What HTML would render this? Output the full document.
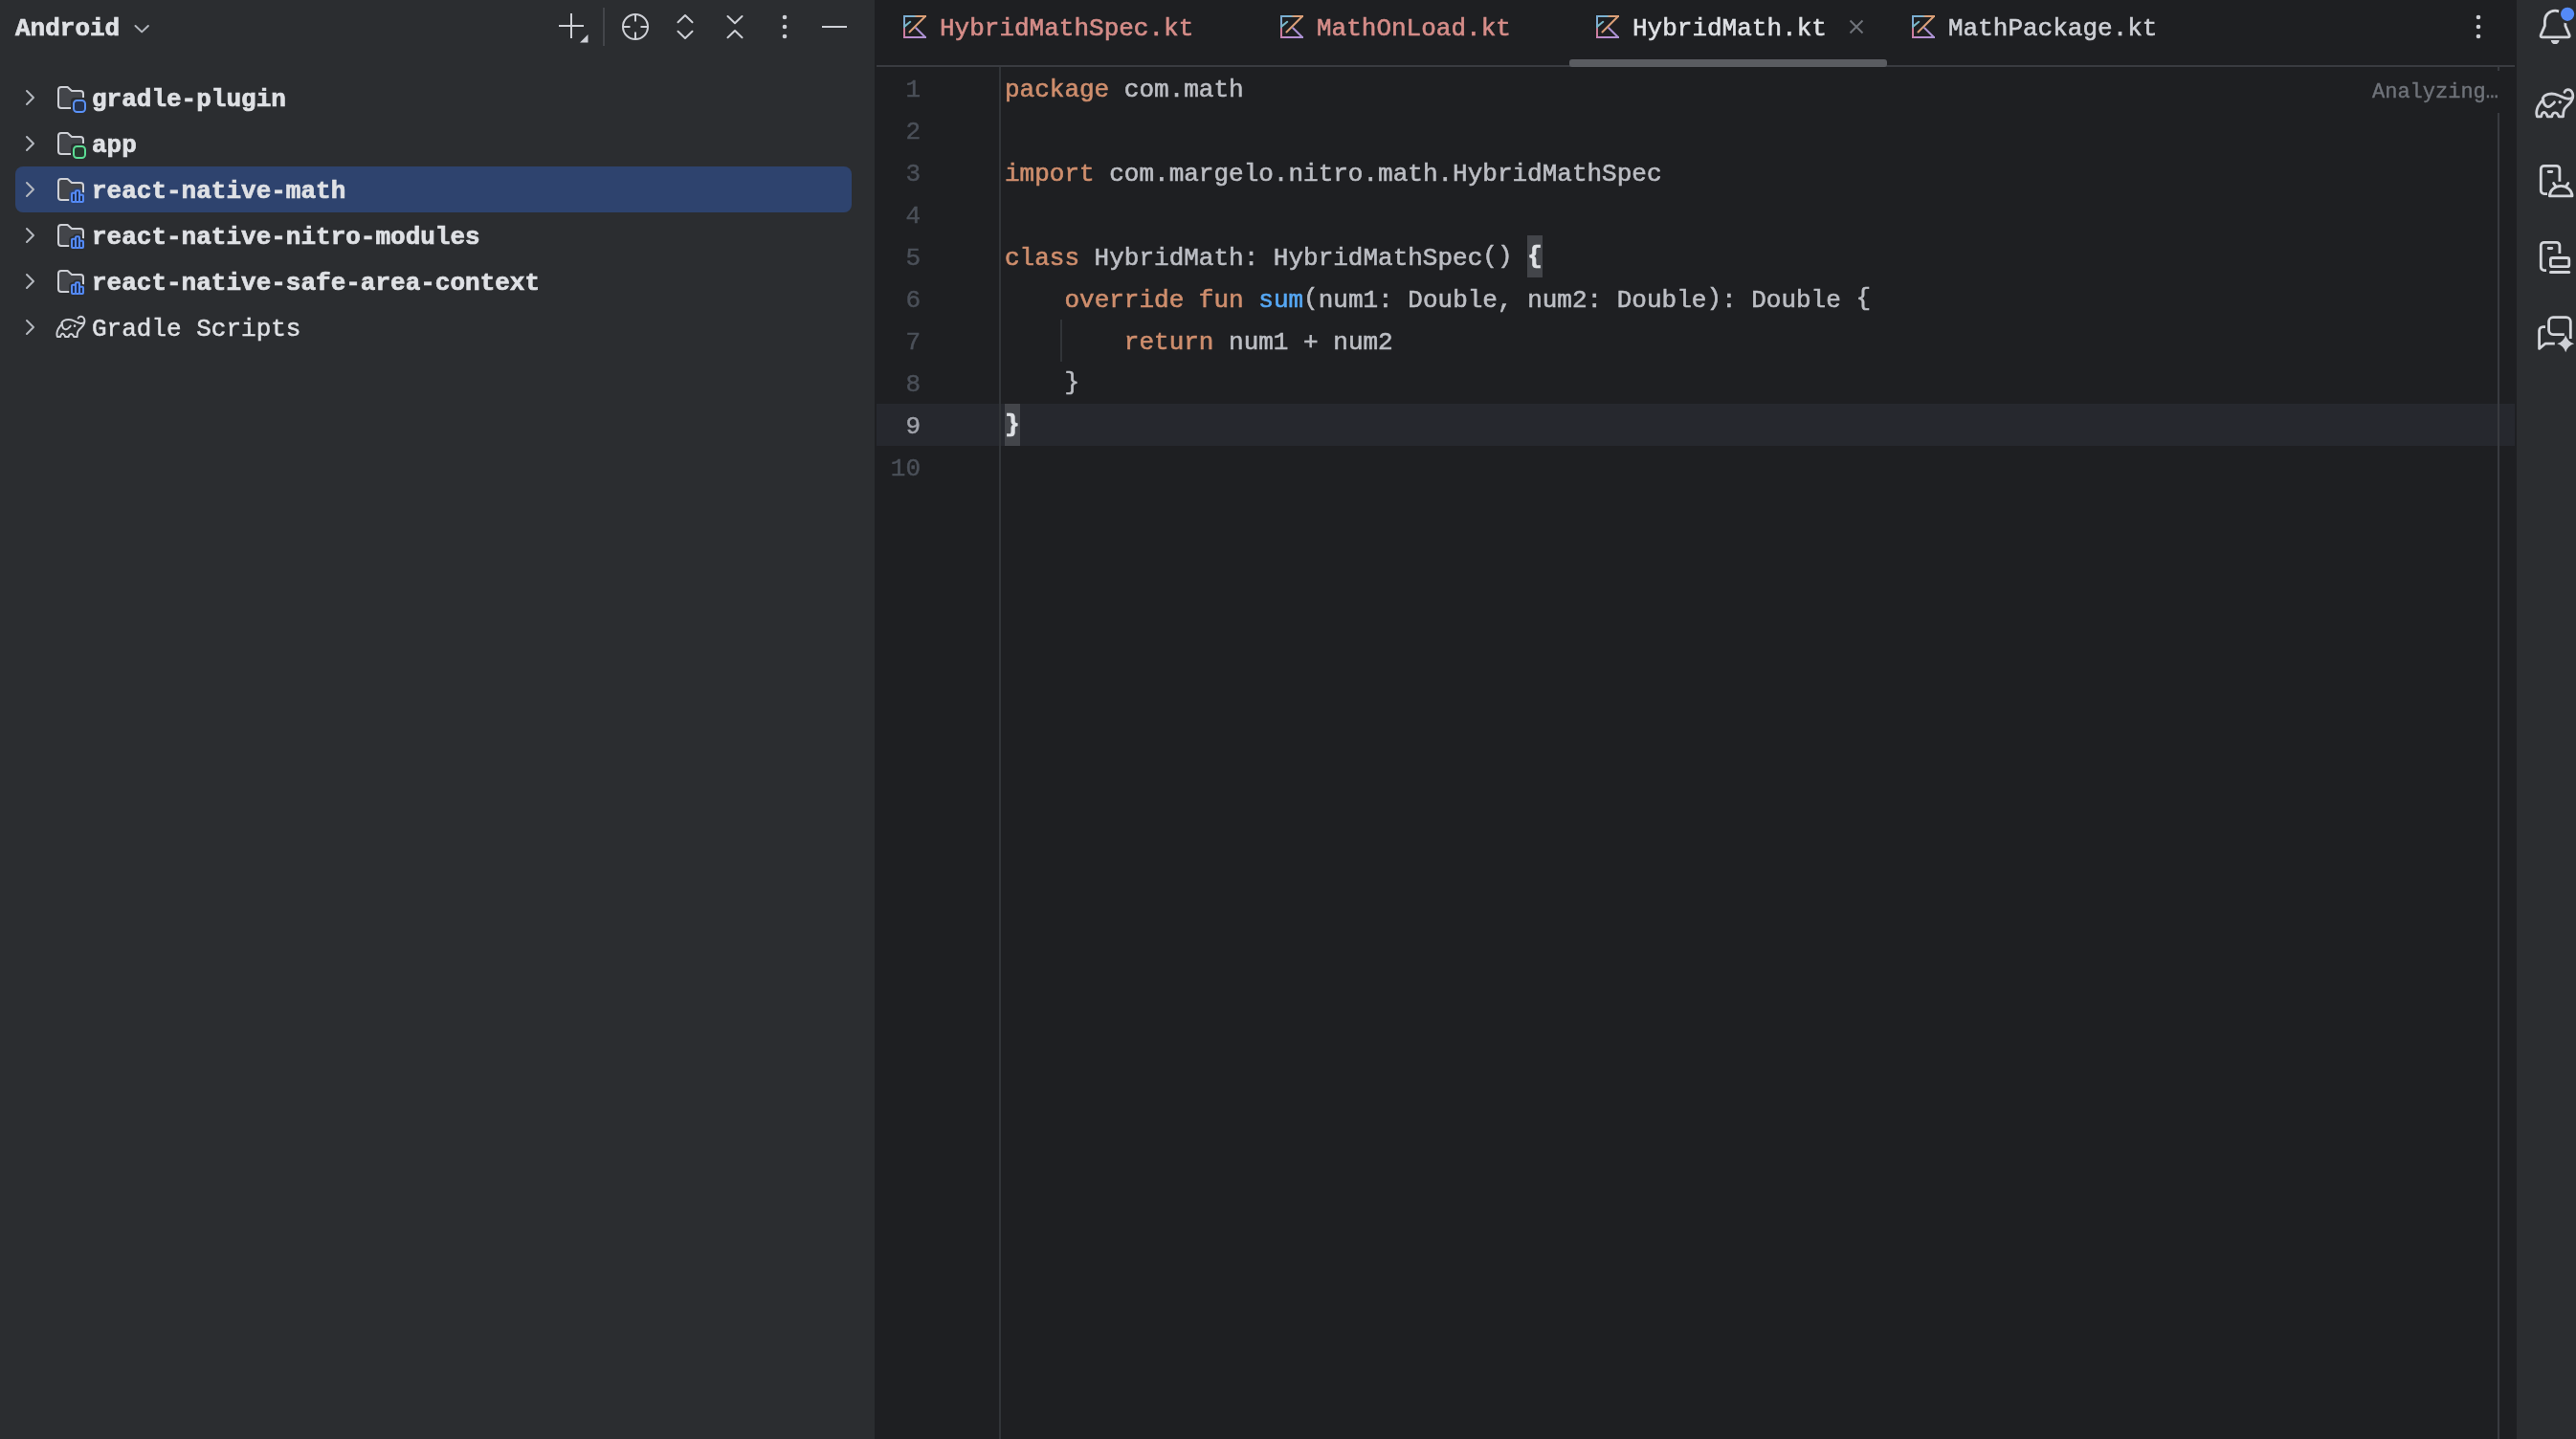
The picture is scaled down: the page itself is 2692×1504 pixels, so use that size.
<!DOCTYPE html>
<html>
<head>
<meta charset="utf-8">
<title>HybridMath.kt</title>
<style>
html,body{margin:0;padding:0;}
body{width:2692px;height:1504px;position:relative;overflow:hidden;background:#1e1f22;
  font-family:"Liberation Mono",monospace;font-size:26px;color:#dfe1e5;}
.abs{position:absolute;}
.t,.code,.ln,.lbl,.an{will-change:transform;}
.t{position:absolute;white-space:pre;font-size:26px;line-height:44px;height:44px;-webkit-text-stroke:0.6px;}
#left{position:absolute;left:0;top:0;width:914px;height:1504px;background:#2b2d30;}
#right{position:absolute;left:2630px;top:0;width:62px;height:1504px;background:#2b2d30;}
.row{position:absolute;left:0;width:914px;height:48px;}
.row .lbl{position:absolute;left:95.8px;top:1.8px;line-height:48px;height:48px;white-space:pre;font-weight:bold;color:#dfe1e5;-webkit-text-stroke:0.7px;}
.row svg{position:absolute;left:0;top:0;}
.sel{position:absolute;left:16px;top:174px;width:874px;height:48px;border-radius:8px;background:#2e436e;}
.ln{position:absolute;left:916px;width:46px;text-align:right;white-space:pre;line-height:44px;height:44px;color:#4b5059;-webkit-text-stroke:0.45px;}
.code{position:absolute;left:1050px;white-space:pre;line-height:44px;height:44px;color:#bcbec4;-webkit-text-stroke:0.6px;}
.k{color:#cf8e6d;}
.f{color:#56a8f5;}
.mb{font-weight:bold;color:#dfe1e5;position:relative;top:-2.5px;}
.b{position:relative;top:-2.5px;}
svg{overflow:visible;}
</style>
</head>
<body>

<!-- ================= LEFT PANEL ================= -->
<div id="left">
  <div class="t" style="left:16px;top:7.8px;font-weight:bold;color:#dfe1e5;-webkit-text-stroke:0.7px">Android</div>
  <svg class="abs" style="left:0;top:0" width="914" height="70" viewBox="0 0 914 70" fill="none" stroke="#ced0d6" stroke-width="2">
    <!-- dropdown chevron -->
    <path d="M141.5 27 L148.2 33.4 L154.9 27" stroke="#b4b8bf" stroke-linecap="round" stroke-linejoin="round"/>
    <!-- plus -->
    <path d="M584 27 H610 M597 14 V40"/>
    <path d="M614.5 36 V44.5 H606 Z" fill="#ced0d6" stroke="none"/>
    <!-- separator -->
    <path d="M631 8 V48" stroke="#43454a"/>
    <!-- target -->
    <circle cx="664" cy="28" r="13"/>
    <path d="M664 15 V22.5 M664 33.5 V41 M651 28 H658.5 M669.5 28 H677"/>
    <!-- expand -->
    <path d="M708.5 23.3 L716 16 L723.5 23.3 M708.5 32.7 L716 40 L723.5 32.7" stroke-linecap="round" stroke-linejoin="round"/>
    <!-- collapse -->
    <path d="M760.5 17 L768 24.3 L775.5 17 M760.5 39.3 L768 32 L775.5 39.3" stroke-linecap="round" stroke-linejoin="round"/>
    <!-- dots -->
    <g fill="#ced0d6" stroke="none"><circle cx="820" cy="18" r="2.3"/><circle cx="820" cy="28" r="2.3"/><circle cx="820" cy="38" r="2.3"/></g>
    <!-- minus -->
    <path d="M859 28 H885"/>
  </svg>

  <div class="sel"></div>

  <svg width="0" height="0" style="position:absolute">
    <defs>
      <g id="chev"><path d="M28 17 L35 24 L28 31" fill="none" stroke="#b4b8bf" stroke-width="2" stroke-linecap="round" stroke-linejoin="round"/></g>
      <g id="folder"><path d="M64 13 H70.6 L75 17 H84 Q87 17 87 20 V32 Q87 35 84 35 H64 Q61 35 61 32 V16 Q61 13 64 13 Z" fill="#43454a" stroke="#ced0d6" stroke-width="2" stroke-linejoin="round"/></g>
      <g id="gradle" fill="none" stroke="#ced0d6" stroke-linecap="round" stroke-linejoin="round">
        <path d="M29.96 4.35 C30.20 4.04 30.78 2.92 31.40 2.47 C32.02 2.02 32.90 1.64 33.70 1.64 C34.50 1.64 35.47 1.95 36.20 2.47 C36.93 2.99 37.67 3.90 38.10 4.77 C38.53 5.64 38.77 6.64 38.80 7.68 C38.83 8.72 38.67 9.88 38.30 11.00 C37.93 12.12 37.30 13.35 36.60 14.40 C35.90 15.45 34.93 16.40 34.10 17.30 C33.27 18.20 32.33 18.97 31.60 19.80 C30.88 20.63 30.20 21.40 29.75 22.30 C29.30 23.20 29.07 24.30 28.90 25.20 C28.72 26.10 28.77 26.93 28.70 27.70 C28.63 28.47 28.53 29.45 28.50 29.80 L24.10 29.80 C23.93 29.45 23.52 28.30 23.10 27.70 C22.68 27.10 22.08 26.52 21.60 26.20 C21.12 25.88 20.68 25.80 20.20 25.80 C19.72 25.80 19.17 25.88 18.70 26.20 C18.23 26.52 17.72 27.10 17.40 27.70 C17.08 28.30 16.90 29.45 16.80 29.80 L12.20 29.80 C12.07 29.45 11.75 28.33 11.40 27.70 C11.05 27.07 10.55 26.38 10.10 26.00 C9.65 25.62 9.18 25.40 8.70 25.40 C8.22 25.40 7.62 25.62 7.20 26.00 C6.78 26.38 6.47 27.07 6.20 27.70 C5.93 28.33 5.70 29.45 5.60 29.80 L1.40 29.80 C1.31 29.45 0.95 28.53 0.85 27.70 C0.74 26.87 0.68 25.77 0.77 24.80 C0.86 23.83 1.09 22.88 1.40 21.90 C1.70 20.92 2.08 19.88 2.60 18.90 C3.12 17.92 3.83 16.90 4.50 16.00 C5.17 15.10 6.03 14.12 6.60 13.50 C7.17 12.88 7.68 12.50 7.90 12.30"/>
        <path d="M7.20 11.00 C7.38 10.68 7.77 9.68 8.30 9.10 C8.83 8.52 9.57 7.95 10.40 7.50 C11.23 7.05 12.27 6.65 13.30 6.40 C14.33 6.15 15.50 6.00 16.60 6.00 C17.70 6.00 18.78 6.15 19.90 6.40 C21.02 6.65 22.18 7.08 23.30 7.50 C24.42 7.92 25.48 8.42 26.60 8.90 C27.72 9.38 28.88 10.02 30.00 10.40 C31.12 10.78 32.27 11.10 33.30 11.20 C34.33 11.30 35.43 11.17 36.20 11.00 C36.97 10.83 37.62 10.33 37.90 10.20"/>
        <path d="M7.65 11.40 C7.72 11.90 7.82 13.45 8.06 14.40 C8.30 15.35 8.64 16.35 9.10 17.10 C9.56 17.85 10.17 18.48 10.80 18.90 C11.43 19.32 12.13 19.63 12.90 19.60 C13.67 19.57 14.65 19.12 15.40 18.70 C16.15 18.28 16.72 17.75 17.40 17.10 C18.08 16.45 19.15 15.18 19.50 14.80"/>
        <circle cx="25.2" cy="14.8" r="1.7" fill="#ced0d6" stroke="none"/>
      </g>
    </defs>
  </svg>

  <!-- row 1 -->
  <div class="row" style="top:78px">
    <svg width="120" height="48" viewBox="0 0 120 48"><use href="#chev"/><use href="#folder"/>
      <rect x="74" y="24" width="18" height="18" rx="4" fill="#2b2d30"/>
      <rect x="77" y="27" width="12" height="12" rx="3.5" fill="#25324d" stroke="#5a91f7" stroke-width="2"/></svg>
    <div class="lbl">gradle-plugin</div>
  </div>
  <!-- row 2 -->
  <div class="row" style="top:126px">
    <svg width="120" height="48" viewBox="0 0 120 48"><use href="#chev"/><use href="#folder"/>
      <rect x="74" y="24" width="18" height="18" rx="4" fill="#2b2d30"/>
      <rect x="77" y="27" width="12" height="12" rx="3.5" fill="#26392e" stroke="#5bdc94" stroke-width="2"/></svg>
    <div class="lbl">app</div>
  </div>
  <!-- row 3 (selected) -->
  <div class="row" style="top:174px">
    <svg width="120" height="48" viewBox="0 0 120 48"><use href="#chev"/><use href="#folder"/>
      <g fill="#2e436e" stroke="#2e436e" stroke-width="5.6" stroke-linejoin="round"><rect x="75" y="27.7" width="4" height="9.3" rx="1"/><rect x="79" y="25.2" width="4" height="11.8" rx="1"/><rect x="83" y="29.8" width="4" height="7.2" rx="1"/></g>
      <g fill="#1e2d50" stroke="#548af7" stroke-width="2" stroke-linejoin="round"><rect x="75" y="27.7" width="4" height="9.3" rx="1"/><rect x="79" y="25.2" width="4" height="11.8" rx="1"/><rect x="83" y="29.8" width="4" height="7.2" rx="1"/></g></svg>
    <div class="lbl">react-native-math</div>
  </div>
  <!-- row 4 -->
  <div class="row" style="top:222px">
    <svg width="120" height="48" viewBox="0 0 120 48"><use href="#chev"/><use href="#folder"/>
      <g fill="#2b2d30" stroke="#2b2d30" stroke-width="5.6" stroke-linejoin="round"><rect x="75" y="27.7" width="4" height="9.3" rx="1"/><rect x="79" y="25.2" width="4" height="11.8" rx="1"/><rect x="83" y="29.8" width="4" height="7.2" rx="1"/></g>
      <g fill="#1e2d50" stroke="#548af7" stroke-width="2" stroke-linejoin="round"><rect x="75" y="27.7" width="4" height="9.3" rx="1"/><rect x="79" y="25.2" width="4" height="11.8" rx="1"/><rect x="83" y="29.8" width="4" height="7.2" rx="1"/></g></svg>
    <div class="lbl">react-native-nitro-modules</div>
  </div>
  <!-- row 5 -->
  <div class="row" style="top:270px">
    <svg width="120" height="48" viewBox="0 0 120 48"><use href="#chev"/><use href="#folder"/>
      <g fill="#2b2d30" stroke="#2b2d30" stroke-width="5.6" stroke-linejoin="round"><rect x="75" y="27.7" width="4" height="9.3" rx="1"/><rect x="79" y="25.2" width="4" height="11.8" rx="1"/><rect x="83" y="29.8" width="4" height="7.2" rx="1"/></g>
      <g fill="#1e2d50" stroke="#548af7" stroke-width="2" stroke-linejoin="round"><rect x="75" y="27.7" width="4" height="9.3" rx="1"/><rect x="79" y="25.2" width="4" height="11.8" rx="1"/><rect x="83" y="29.8" width="4" height="7.2" rx="1"/></g></svg>
    <div class="lbl">react-native-safe-area-context</div>
  </div>
  <!-- row 6 -->
  <div class="row" style="top:318px">
    <svg width="120" height="48" viewBox="0 0 120 48"><use href="#chev"/>
      <g transform="translate(58.9 11.4) scale(0.76)" stroke-width="2.6"><use href="#gradle"/></g></svg>
    <div class="lbl" style="font-weight:normal;-webkit-text-stroke:0.5px">Gradle Scripts</div>
  </div>
</div>

<!-- ================= EDITOR ================= -->
<div id="editor">
  <!-- tab bar border -->
  <div class="abs" style="left:916px;top:68px;width:1712px;height:2px;background:#393b40"></div>
  <!-- active tab underline -->
  <div class="abs" style="left:1640px;top:62px;width:332px;height:8px;border-radius:3px;background:#5a5c61"></div>

  <svg width="0" height="0" style="position:absolute">
    <defs>
      <linearGradient id="kg1" gradientUnits="userSpaceOnUse" x1="0" y1="0" x2="24" y2="0"><stop offset="0" stop-color="#79acd2"/><stop offset="0.45" stop-color="#79b4d2"/><stop offset="0.6" stop-color="#d8a07a"/><stop offset="1" stop-color="#dc9e74"/></linearGradient>
      <linearGradient id="kg2" gradientUnits="userSpaceOnUse" x1="0" y1="0" x2="0" y2="24"><stop offset="0" stop-color="#7aacd2"/><stop offset="0.5" stop-color="#80a8d0"/><stop offset="0.6" stop-color="#cc7a92"/><stop offset="1" stop-color="#cc7ea6"/></linearGradient>
      <linearGradient id="kg3" gradientUnits="userSpaceOnUse" x1="0" y1="0" x2="24" y2="0"><stop offset="0" stop-color="#c882ae"/><stop offset="0.3" stop-color="#bc8ed2"/><stop offset="1" stop-color="#ae92d2"/></linearGradient>
      <g id="kt" fill="none" stroke-width="2" stroke-linecap="butt">
        <path d="M0 1 H24" stroke="url(#kg1)"/>
        <path d="M1 0 V24" stroke="url(#kg2)"/>
        <path d="M0 23 H24" stroke="url(#kg3)"/>
        <path d="M23.5 0.5 L6.5 17.5" stroke="#dca078" stroke-linecap="round"/>
        <path d="M13.2 13.2 L23.5 23.5" stroke="#ab92d4" stroke-linecap="round"/>
        <path d="M1.3 11.6 L7.2 6.8" stroke="#78b8c8" stroke-linecap="round"/>
      </g>
    </defs>
  </svg>

  <!-- tabs -->
  <svg class="abs" style="left:944px;top:16px;overflow:hidden" width="24" height="24"><use href="#kt"/></svg>
  <div class="t" style="left:981.5px;top:7.8px;color:#d68d89">HybridMathSpec.kt</div>

  <svg class="abs" style="left:1338px;top:16px;overflow:hidden" width="24" height="24"><use href="#kt"/></svg>
  <div class="t" style="left:1375.5px;top:7.8px;color:#d68d89">MathOnLoad.kt</div>

  <svg class="abs" style="left:1668px;top:16px;overflow:hidden" width="24" height="24"><use href="#kt"/></svg>
  <div class="t" style="left:1705.5px;top:7.8px;color:#dfe1e5">HybridMath.kt</div>
  <svg class="abs" style="left:1932px;top:20px" width="16" height="16" viewBox="0 0 16 16"><path d="M1.5 1.5 L14.5 14.5 M14.5 1.5 L1.5 14.5" stroke="#6f737a" stroke-width="2" fill="none"/></svg>

  <svg class="abs" style="left:1998px;top:16px;overflow:hidden" width="24" height="24"><use href="#kt"/></svg>
  <div class="t" style="left:2035.5px;top:7.8px;color:#ced0d6">MathPackage.kt</div>

  <!-- tab bar menu dots -->
  <svg class="abs" style="left:2580px;top:8px" width="20" height="40" viewBox="0 0 20 40"><g fill="#ced0d6"><circle cx="10" cy="10" r="2.3"/><circle cx="10" cy="20" r="2.3"/><circle cx="10" cy="30" r="2.3"/></g></svg>

  <!-- current line highlight -->
  <div class="abs" style="left:916px;top:422px;width:1712px;height:44px;background:#26282e"></div>
  <!-- gutter separator -->
  <div class="abs" style="left:1044px;top:70px;width:2px;height:1434px;background:#313438"></div>
  <!-- right stripe line -->
  <div class="abs" style="left:2610px;top:70px;width:2px;height:4px;background:#393b40"></div>
  <div class="abs" style="left:2610px;top:118px;width:2px;height:1386px;background:#393b40"></div>
  <!-- indent guide -->
  <div class="abs" style="left:1108px;top:334px;width:2px;height:44px;background:#313438"></div>
  <!-- brace match highlights -->
  <div class="abs" style="left:1596px;top:246px;width:15.6px;height:44px;background:#43454a"></div>
  <div class="abs" style="left:1050px;top:422px;width:15.6px;height:44px;background:#43454a"></div>

  <!-- line numbers -->
  <div class="ln" style="top:71.8px">1</div>
  <div class="ln" style="top:115.8px">2</div>
  <div class="ln" style="top:159.8px">3</div>
  <div class="ln" style="top:203.8px">4</div>
  <div class="ln" style="top:247.8px">5</div>
  <div class="ln" style="top:291.8px">6</div>
  <div class="ln" style="top:335.8px">7</div>
  <div class="ln" style="top:379.8px">8</div>
  <div class="ln" style="top:423.8px;color:#a1a3ab">9</div>
  <div class="ln" style="top:467.8px">10</div>

  <!-- code -->
  <div class="code" style="top:71.8px"><span class="k">package</span> com.math</div>
  <div class="code" style="top:159.8px"><span class="k">import</span> com.margelo.nitro.math.HybridMathSpec</div>
  <div class="code" style="top:247.8px"><span class="k">class</span> HybridMath: HybridMathSpec<span class="b">()</span> <span class="mb">{</span></div>
  <div class="code" style="top:291.8px">    <span class="k">override</span> <span class="k">fun</span> <span class="f">sum</span><span class="b">(</span>num1: Double, num2: Double<span class="b">)</span>: Double <span class="b">{</span></div>
  <div class="code" style="top:335.8px">        <span class="k">return</span> num1 + num2</div>
  <div class="code" style="top:379.8px">    <span class="b">}</span></div>
  <div class="code" style="top:423.8px"><span class="mb">}</span></div>

  <!-- Analyzing -->
  <div class="abs an" style="left:2478.5px;top:79.3px;font-size:22px;line-height:36px;height:36px;white-space:pre;color:#6f737a;-webkit-text-stroke:0.4px">Analyzing…</div>
</div>

<!-- ================= RIGHT TOOLBAR ================= -->
<div id="right">
  <svg class="abs" style="left:0;top:0" width="62" height="400" viewBox="2630 0 62 400" fill="none" stroke="#d3d5da" stroke-width="2.8" stroke-linejoin="round">
    <!-- bell -->
    <path d="M2659.4 27 V21.85 A10.75 10.75 0 0 1 2680.9 21.85 V27 L2685.1 36.6 Q2685.8 38.9 2683.3 38.9 H2657 Q2654.5 38.9 2655.2 36.6 Z"/>
    <path d="M2665.8 42.1 H2674.5 A4.35 4 0 0 1 2665.8 42.1 Z" fill="#ced0d6" stroke="none"/>
    <circle cx="2683.1" cy="14.8" r="9.6" fill="#2b2d30" stroke="none"/>
    <circle cx="2683.1" cy="14.8" r="7.1" fill="#548af7" stroke="none"/>
    <!-- gradle -->
    <g transform="translate(2650 92)"><use href="#gradle"/></g>
    <!-- device manager -->
    <path d="M2674.9 189.8 V176.8 A3.5 3.5 0 0 0 2671.4 173.3 H2658.8 A3.5 3.5 0 0 0 2655.3 176.8 V199.1 A3.5 3.5 0 0 0 2658.8 202.6 H2662"/>
    <rect x="2661.8" y="178.1" width="6.4" height="2.8" rx="1.4" fill="#ced0d6" stroke="none"/>
    <path d="M2664.4 204.9 A11.8 10.5 0 0 1 2688 204.9 Z"/>
    <path d="M2668.6 191.4 L2670.9 195 M2683.8 191.4 L2681.5 195" stroke-linecap="round"/>
    <!-- running devices -->
    <path d="M2674.9 265 V256.8 A3.5 3.5 0 0 0 2671.4 253.3 H2658.8 A3.5 3.5 0 0 0 2655.3 256.8 V279.1 A3.5 3.5 0 0 0 2658.8 282.6 H2661"/>
    <rect x="2661.8" y="258.1" width="6.4" height="2.8" rx="1.4" fill="#ced0d6" stroke="none"/>
    <rect x="2665.4" y="269.5" width="19.4" height="9.2" rx="2" stroke-width="2.8"/>
    <path d="M2665.5 284.6 H2684.7" stroke-width="3" stroke-linecap="round"/>
    <!-- ai chat -->
    <path d="M2679.8 349.6 H2668.1 A4.5 4.5 0 0 1 2663.6 345.1 V336.1 A4.5 4.5 0 0 1 2668.1 331.6 H2681.8 A4.5 4.5 0 0 1 2686.3 336.1 V354"/>
    <path d="M2660 341.6 H2657.6 A4 4 0 0 0 2653.6 345.6 V364.4 L2659.8 359.2 H2669.8"/>
    <path d="M2681.2 350.2 Q2683.2 357.2 2690.2 359.2 Q2683.2 361.2 2681.2 368.2 Q2679.2 361.2 2672.2 359.2 Q2679.2 357.2 2681.2 350.2 Z" fill="#ced0d6" stroke="none"/>
  </svg>
</div>

</body>
</html>
